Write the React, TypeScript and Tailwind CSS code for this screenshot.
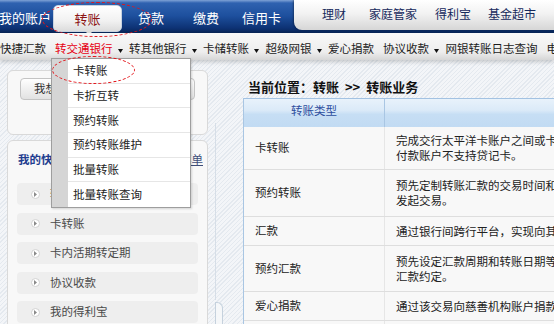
const font = "font-['Noto_Sans_CJK_SC','Noto_Sans_CJK_SC',sans-serif]";

const subNav = [
  { t: "快捷汇款", arrow: false },
  { t: "转交通银行", arrow: true, red: true },
  { t: "转其他银行", arrow: true },
  { t: "卡储转账", arrow: true },
  { t: "超级网银", arrow: true },
  { t: "爱心捐款", arrow: false },
  { t: "协议收款", arrow: true },
  { t: "网银转账日志查询", arrow: false },
  { t: "电子回单", arrow: false },
];

const menu = ["卡转账", "卡折互转", "预约转账", "预约转账维护", "批量转账", "批量转账查询"];

const quick = ["转账汇款", "卡转账", "卡内活期转定期", "协议收款", "我的得利宝"];

const rows = [
  { name: "卡转账", h: "h-[43px]", lines: ["完成交行太平洋卡账户之间或卡折之间的资金划转，", "付款账户不支持贷记卡。"] },
  { name: "预约转账", h: "h-[47px]", lines: ["预先定制转账汇款的交易时间和金额，系统自动", "发起交易。"] },
  { name: "汇款", h: "h-[29px]", lines: ["通过银行间跨行平台，实现向其他银行账户汇款。"] },
  { name: "预约汇款", h: "h-[46px]", lines: ["预先设定汇款周期和转账日期等信息，系统自动执行", "汇款约定。"] },
  { name: "爱心捐款", h: "h-[29px]", lines: ["通过该交易向慈善机构账户捐款。"] },
  { name: "", h: "h-[30px]", lines: [""] },
];

function DownArrow() {
  return (
    <svg width="5" height="4" viewBox="0 0 5 4" className="ml-[5px] mr-[6.5px] mt-[4px]">
      <path d="M0 0H5L2.5 4Z" fill="#111" />
    </svg>
  );
}

function RowArrow() {
  return (
    <span className="flex h-[9px] w-[9px] items-center justify-center rounded-full border border-[#d2d2d2] bg-white">
      <svg width="3" height="5" viewBox="0 0 3 5">
        <path d="M0 0L3 2.5L0 5Z" fill="#8a8a8a" />
      </svg>
    </span>
  );
}

export default function App() {
  return (
    <div className={`relative h-[324px] w-[554px] overflow-hidden bg-[repeating-linear-gradient(135deg,#e4e9ef_0px,#e4e9ef_1px,#f3f5f8_1px,#f3f5f8_3px)] ${font}`}>
      {/* top bar */}
      <div className="flex h-[33px] bg-[linear-gradient(to_bottom,#7fa2d6_0px,#2f62b0_3px,#1d4f9d_16px,#0d3274_28px,#082556_33px)]">
        <div className="flex items-center pt-[2px] text-[13px] text-white">
          <span className="-ml-px">我的账户</span>
          <div className="relative ml-[2px] flex h-[27px] w-[69px] items-center justify-center self-start mt-[3px] rounded-[5px] border border-[#c9d3e0] bg-[linear-gradient(#ffffff,#f1f1f1_60%,#dcdcdc)] text-[#8c1414]">
            转账
            <span className="absolute -bottom-[4px] left-[31px] h-0 w-0 border-x-[4px] border-t-[4px] border-x-transparent border-t-[#dcdcdc]" />
          </div>
          <span className="ml-[16px]">贷款</span>
          <span className="ml-[29px]">缴费</span>
          <span className="ml-[23px]">信用卡</span>
        </div>
        <div className="ml-auto flex h-[30px] w-[260px] items-center rounded-bl-[8px] bg-[linear-gradient(#ffffff,#f2f2f2_45%,#d6d6d6)] pb-[3px] pl-[28px] text-[12px] text-[#16295c] shadow-[-1px_0_2px_rgba(0,0,0,0.35)]">
          <span>理财</span>
          <span className="ml-[23px]">家庭管家</span>
          <span className="ml-[18px]">得利宝</span>
          <span className="ml-[17px]">基金超市</span>
        </div>
      </div>

      {/* sub nav */}
      <div className="relative z-[1] flex h-[27px] items-center whitespace-nowrap bg-[linear-gradient(#f8f8f8,#eeeeee_70%,#d6d6d6)] pt-[5px] text-[11.5px] text-[#1c1c1c] shadow-[0_2px_4px_rgba(0,0,0,0.18)]">
        {subNav.map((n, i) => (
          <div key={n.t} className={`flex items-center ${i > 0 && !subNav[i - 1].arrow ? "ml-[9px]" : ""}`}>
            <span className={n.red ? "text-[#e60012]" : ""}>{n.t}</span>
            {n.arrow && <DownArrow />}
          </div>
        ))}
      </div>

      {/* main */}
      <div className="flex">
        <div className="ml-[7px] flex w-[201px] shrink-0 flex-col gap-[5px] pt-[10px]">
          <div className="h-[65px] rounded-[6px] border border-[#d9d9d9] bg-[#f8f8f8] px-[12px] pt-[7px]">
            <div className="flex h-[22px] items-center rounded-[4px] border border-[#c4c4c4] bg-[linear-gradient(#ffffff,#f0f0f0_50%,#e2e2e2)] pl-[13px] text-[11.5px] text-[#333]">
              我想快速转账
            </div>
          </div>
          <div className="h-[200px] rounded-[6px] border border-[#d9d9d9] bg-[#f8f8f8] px-[9px]">
            <div className="-mr-[5px] flex h-[42px] items-center justify-between pb-[4px] pl-[1px] text-[11.5px]">
              <span className="font-bold text-[#1f3d8f]">我的快捷菜单</span>
              <span className="text-[#3e4d78] underline">设置菜单</span>
            </div>
            <div className="flex flex-col gap-[7.5px]">
              {quick.map((q) => (
                <div key={q} className="flex h-[22px] items-center rounded-[4px] bg-[#eeeeee] pl-[14px] text-[11.5px] text-[#4a4a4a]">
                  <RowArrow />
                  <span className="ml-[10px]">{q}</span>
                </div>
              ))}
            </div>
          </div>
        </div>

        <div className="flex w-[35px] shrink-0 flex-col pl-[7px] pt-[63px]">
          <div className="h-[177px] w-px bg-[#d6dee7]" />
          <div className="mt-[2px] h-[24px] w-[8px] rounded-tr-[6px] border-l border-r border-t border-[#c5d1dd] bg-[#f5f7f9]" />
        </div>

        <div className="min-w-0 flex-1 overflow-hidden">
          <div className="flex h-[38px] items-end pb-[2px] pl-[5px] text-[13px] font-bold text-[#111] whitespace-nowrap">
            当前位置：转账&nbsp;&nbsp;&gt;&gt;&nbsp;&nbsp;转账业务
          </div>
          <div className="w-[480px] border-l border-[#a9c6e3] text-[11.5px] text-[#222]">
            <div className="flex h-[29px] border-t border-[#a3c2e2] bg-[linear-gradient(#e8f2fb,#dbeaf8_40%,#c6def4_55%,#c2dbf3)]">
              <div className="flex w-[141px] items-center justify-center border-r border-[#a9c6e3] pb-[4px] text-[#2d4e9e]">
                转账类型
              </div>
              <div className="flex-1" />
            </div>
            {rows.map((r, i) => (
              <div key={i} className={`flex ${r.h} border-b border-[#dedede] bg-[#f8f8f8]`}>
                <div className="flex w-[141px] items-center border-r border-[#e6e6e6] pl-[11px]">{r.name}</div>
                <div className="flex flex-1 flex-col justify-center whitespace-nowrap pl-[11px] leading-[15px]">
                  {r.lines.map((l, j) => (
                    <span key={j}>{l}</span>
                  ))}
                </div>
              </div>
            ))}
          </div>
        </div>
      </div>

      {/* dropdown menu */}
      <div className="absolute left-[51px] top-[58px] z-10 flex h-[150px] w-[140px] border border-[#9e9e9e] bg-white shadow-[1px_1px_2px_rgba(0,0,0,0.15)]">
        <div className="w-[16px] bg-[#d5d5d5]" />
        <div className="flex flex-1 flex-col">
          {menu.map((m, i) => (
            <div key={m} className={`flex h-[25px] items-center pl-[5px] text-[11.5px] text-[#222] ${i < menu.length - 1 ? "border-b border-[#e6e6e6]" : ""}`}>
              {m}
            </div>
          ))}
        </div>
      </div>

      {/* red annotation ellipses */}
      <div className="absolute left-[42px] top-[2px] z-20 h-[35px] w-[110px] rounded-[50%] border border-dashed border-[#e3151a]" />
      <div className="absolute left-[52px] top-[56px] z-20 h-[28px] w-[83px] rounded-[50%] border border-dashed border-[#e3151a]" />
    </div>
  );
}
